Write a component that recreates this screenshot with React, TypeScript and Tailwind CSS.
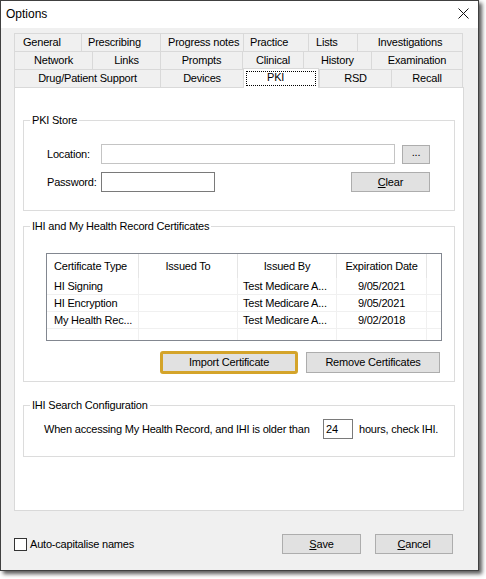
import React from 'react';

type TabDef = { label: string; cls: string };

const tabRows: TabDef[][] = [
    [
        { label: 'General', cls: 'w-[67px] pl-[8px]' },
        { label: 'Prescribing', cls: 'w-[79px] pl-[6px]' },
        { label: 'Progress notes', cls: 'w-[83px] pl-[7px]' },
        { label: 'Practice', cls: 'w-[65px] pl-[6px]' },
        { label: 'Lists', cls: 'w-[49px] pl-[7px]' },
        { label: 'Investigations', cls: 'w-[106px] justify-center border-r' },
    ],
    [
        { label: 'Network', cls: 'w-[78px] justify-center' },
        { label: 'Links', cls: 'w-[68px] justify-center' },
        { label: 'Prompts', cls: 'w-[82px] justify-center' },
        { label: 'Clinical', cls: 'w-[61px] justify-center' },
        { label: 'History', cls: 'w-[68px] justify-center' },
        { label: 'Examination', cls: 'w-[92px] justify-center border-r' },
    ],
];

const certs = [
    { type: 'HI Signing', to: '', by: 'Test Medicare A...', exp: '9/05/2021' },
    { type: 'HI Encryption', to: '', by: 'Test Medicare A...', exp: '9/05/2021' },
    { type: 'My Health Rec...', to: '', by: 'Test Medicare A...', exp: '9/02/2018' },
    { type: '', to: '', by: '', exp: '' },
];

const Tab: React.FC<TabDef> = ({ label, cls }) => (
    <div className={`flex h-full items-center border-l border-t border-[#d9d9d9] bg-[#f0f0f0] ${cls}`}>
        <span>{label}</span>
    </div>
);

const Button: React.FC<{ cls: string; children: React.ReactNode }> = ({ cls, children }) => (
    <div className={`flex items-center justify-center border border-[#adadad] bg-[#e1e1e1] ${cls}`}>
        {children}
    </div>
);

const Group: React.FC<{ title: string; cls: string; children: React.ReactNode }> = ({ title, cls, children }) => (
    <fieldset className={`mx-[8px] flex flex-col border border-[#dcdcdc] ${cls}`}>
        <legend className="ml-[6px] px-[2px] leading-[13px]">{title}</legend>
        {children}
    </fieldset>
);

export default function App() {
    return (
        <div className="h-[579px] w-[486px] bg-white font-['Liberation_Sans',Arial,sans-serif] text-[11px] leading-[13px] tracking-[-0.2px] text-black">
            <div className="flex h-[571px] w-[479px] flex-col border border-[#404040] bg-[#f0f0f0] shadow-[3px_3px_4px_rgba(0,0,0,0.65)]">
                {/* Title bar */}
                <div className="flex h-[27px] items-center justify-between bg-white pl-[5px] pr-[9px]">
                    <span className="text-[12px] tracking-normal">Options</span>
                    <svg width="11" height="11" viewBox="0 0 11 11" className="mb-[2px]">
                        <path d="M0.5 0.5 L10.5 10.5 M10.5 0.5 L0.5 10.5" stroke="#111" strokeWidth="1" />
                    </svg>
                </div>

                <div className="mt-[5px] pl-[13px]">
                    {/* Tab strip */}
                    {tabRows.map((row, i) => (
                        <div key={i} className="flex h-[18px]">
                            {row.map(t => <Tab key={t.label} {...t} />)}
                        </div>
                    ))}
                    <div className="flex h-[18px] items-end">
                        <Tab label="Drug/Patient Support" cls="w-[146px] justify-center" />
                        <Tab label="Devices" cls="w-[83px] justify-center" />
                        <div className="relative top-[1px] z-10 flex h-[20px] w-[76px] border-x border-t border-[#d9d9d9] bg-white p-[2px]">
                            <div className="flex flex-1 items-center border border-dotted border-black pb-[2px] pl-[20px]">PKI</div>
                        </div>
                        <Tab label="RSD" cls="w-[72px] justify-center" />
                        <Tab label="Recall" cls="w-[72px] justify-center border-r" />
                    </div>

                    {/* Tab page */}
                    <div className="flex h-[424px] w-[450px] flex-col border border-[#d9d9d9] bg-white">
                        <Group title="PKI Store" cls="mt-[26px] h-[97px]">
                            <div className="mt-[17px] flex items-center pl-[23px] pr-[24px]">
                                <span className="w-[54px]">Location:</span>
                                <div className="h-[20px] w-[294px] border border-[#c4c4c4] bg-white" />
                                <Button cls="ml-[7px] h-[19px] w-[28px] pb-[3px]">...</Button>
                            </div>
                            <div className="mt-[8px] flex items-center pl-[23px] pr-[24px]">
                                <span className="w-[54px]">Password:</span>
                                <div className="h-[20px] w-[114px] border border-[#7a7a7a] bg-white" />
                                <Button cls="ml-auto h-[20px] w-[79px]">
                                    <span><span className="underline">C</span>lear</span>
                                </Button>
                            </div>
                        </Group>

                        <Group title="IHI and My Health Record Certificates" cls="mt-[9px] h-[162px]">
                            <div className="ml-[22px] mt-[20px] flex h-[88px] w-[396px] flex-col overflow-hidden border border-[#828790] bg-white">
                                <div className="flex h-[24px] shrink-0">
                                    <div className="flex w-[92px] items-center border-r border-[#e5e5e5] pl-[7px]">Certificate Type</div>
                                    <div className="flex w-[99px] items-center justify-center border-r border-[#e5e5e5]">Issued To</div>
                                    <div className="flex w-[99px] items-center justify-center border-r border-[#e5e5e5]">Issued By</div>
                                    <div className="flex w-[90px] items-center justify-center border-r border-[#e5e5e5]">Expiration Date</div>
                                    <div className="flex-1" />
                                </div>
                                {certs.map((c, i) => (
                                    <div key={i} className="flex h-[17px] shrink-0 border-b border-[#f0f0f0]">
                                        <div className="flex w-[92px] items-center border-r border-[#f0f0f0] pl-[7px]">{c.type}</div>
                                        <div className="flex w-[99px] items-center border-r border-[#f0f0f0]">{c.to}</div>
                                        <div className="flex w-[99px] items-center border-r border-[#f0f0f0] pl-[5px]">{c.by}</div>
                                        <div className="flex w-[90px] items-center justify-center border-r border-[#f0f0f0]">{c.exp}</div>
                                        <div className="flex-1" />
                                    </div>
                                ))}
                            </div>
                            <div className="mt-[10px] flex items-center justify-end gap-[8px] pr-[14px]">
                                <div className="flex h-[23px] w-[138px] items-center justify-center rounded-[3px] border-[3px] border-[#d4a42a] bg-[#e1e1e1]">
                                    Import Certificate
                                </div>
                                <Button cls="h-[21px] w-[134px]">Remove Certificates</Button>
                            </div>
                        </Group>

                        <Group title="IHI Search Configuration" cls="mt-[17px] h-[58px]">
                            <div className="mt-[7px] flex items-center pl-[20px]">
                                <span className="w-[279px]">When accessing My Health Record, and IHI is older than</span>
                                <div className="flex h-[20px] w-[30px] items-center border border-[#7a7a7a] bg-white pl-[2px]">24</div>
                                <span className="ml-[6px]">hours, check IHI.</span>
                            </div>
                        </Group>
                    </div>
                </div>

                {/* Footer */}
                <div className="mt-[23px] flex items-center pl-[13px] pr-[25px]">
                    <div className="h-[13px] w-[13px] border border-[#333333] bg-white" />
                    <span className="ml-[3px]">Auto-capitalise names</span>
                    <Button cls="ml-auto h-[20px] w-[79px]">
                        <span><span className="underline">S</span>ave</span>
                    </Button>
                    <Button cls="ml-[14px] h-[20px] w-[78px]">
                        <span><span className="underline">C</span>ancel</span>
                    </Button>
                </div>
            </div>
        </div>
    );
}
